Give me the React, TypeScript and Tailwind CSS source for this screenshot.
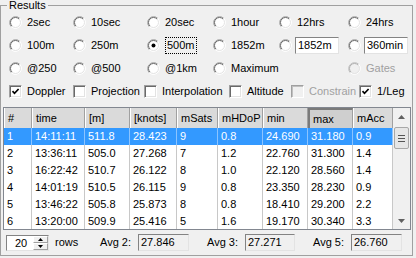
import React from "react";

// Classic Win32-style "Results" panel: option grid, flag checkboxes, results table.
const rows = [
  ["1", "14:11:11", "511.8", "28.423", "9", "0.8", "24.690", "31.180", "0.9"],
  ["2", "13:36:11", "505.0", "27.268", "7", "1.2", "22.760", "31.300", "1.4"],
  ["3", "16:22:42", "510.7", "26.122", "8", "1.0", "22.120", "28.560", "1.4"],
  ["4", "14:01:19", "510.5", "26.115", "9", "0.8", "23.350", "28.230", "0.9"],
  ["5", "13:46:22", "505.8", "25.873", "8", "0.8", "18.410", "29.200", "2.2"],
  ["6", "13:20:00", "509.9", "25.416", "5", "1.6", "19.170", "30.340", "3.3"],
];
const headers = ["#", "time", "[m]", "[knots]", "mSats", "mHDoP", "min", "max", "mAcc"];
const sunken = "border border-t-[#838383] border-l-[#838383] border-r-[#e3e3e3] border-b-[#e3e3e3]";

function Radio({ checked = false, disabled = false }: { checked?: boolean; disabled?: boolean }) {
  return (
    <svg width="13" height="13" viewBox="0 0 13 13" className="shrink-0">
      <circle cx="6.5" cy="6.5" r="6" fill={disabled ? "#f0f0f0" : "#fff"} />
      <path d="M2.26 10.74 A6 6 0 0 1 10.74 2.26" stroke={disabled ? "#c0c0c0" : "#a0a0a0"} fill="none" />
      <path d="M2.96 10.04 A5 5 0 0 1 10.04 2.96" stroke={disabled ? "#b0b0b0" : "#696969"} fill="none" />
      <path d="M10.74 2.26 A6 6 0 0 1 2.26 10.74" stroke="#ffffff" fill="none" />
      <path d="M10.04 2.96 A5 5 0 0 1 2.96 10.04" stroke="#e3e3e3" fill="none" />
      {checked && <circle cx="6.5" cy="6.5" r="2" fill="#000" />}
    </svg>
  );
}

function Check({ checked = false, disabled = false }: { checked?: boolean; disabled?: boolean }) {
  return (
    <span
      className={`flex w-[13px] h-[13px] shrink-0 items-center justify-center border border-t-[#a0a0a0] border-l-[#a0a0a0] border-r-white border-b-white ${
        disabled ? "bg-[#f0f0f0] shadow-[inset_1px_1px_0_#c0c0c0]" : "bg-white shadow-[inset_1px_1px_0_#696969,inset_-1px_-1px_0_#e3e3e3]"
      }`}
    >
      {checked && (
        <svg width="9" height="9" viewBox="0 0 9 9">
          <path d="M1.5 4.2 L3.5 6.3 L7.6 2" stroke="#000" strokeWidth="1.7" fill="none" />
        </svg>
      )}
    </span>
  );
}

function Opt({ label, checked, focus }: { label: string; checked?: boolean; focus?: boolean }) {
  return (
    <div className="flex items-center gap-[5px]">
      <Radio checked={checked} />
      <span className={focus ? "border border-dotted border-black px-[1px] leading-[15px]" : ""}>{label}</span>
    </div>
  );
}

function OptBox({ value }: { value: string }) {
  return (
    <div className="flex items-center gap-[3px]">
      <Radio />
      <div className={`${sunken} bg-white h-[17px] w-[44px] pl-[2px] leading-[15px]`}>{value}</div>
    </div>
  );
}

function Flag({ label, checked, disabled }: { label: string; checked?: boolean; disabled?: boolean }) {
  return (
    <div className="flex items-center gap-[5px]">
      <Check checked={checked} disabled={disabled} />
      <span className={`whitespace-nowrap ${disabled ? "text-[#a0a0a0]" : ""}`}>{label}</span>
    </div>
  );
}

function Arrow({ up }: { up?: boolean }) {
  return (
    <svg width="7" height="4" viewBox="0 0 7 4">
      <polygon points={up ? "3.5,0 7,4 0,4" : "0,0 7,0 3.5,4"} fill="#606060" />
    </svg>
  );
}

const cols = "grid grid-cols-[28px_53px_45px_47px_41px_45px_45px_45px_40px]";

export default function App() {
  return (
    <div className="w-[416px] h-[258px] bg-[#f0f0f0] overflow-hidden text-[11px] text-black font-['Liberation_Sans',Arial,sans-serif]">
      <fieldset className="w-[413px] border border-[#a0a0a0]">
        <legend className="ml-[6px] px-[2px] leading-[11px]">Results</legend>

        <div className="grid grid-cols-[64px_74px_66px_66px_69px_1fr] auto-rows-[23px] items-center pl-[8px]">
          <Opt label="2sec" />
          <Opt label="10sec" />
          <Opt label="20sec" />
          <Opt label="1hour" />
          <Opt label="12hrs" />
          <Opt label="24hrs" />

          <Opt label="100m" />
          <Opt label="250m" />
          <Opt label="500m" checked focus />
          <Opt label="1852m" />
          <OptBox value="1852m" />
          <OptBox value="360min" />

          <Opt label="@250" />
          <Opt label="@500" />
          <Opt label="@1km" />
          <Opt label="Maximum" />
          <div />
          <div className="flex items-center gap-[5px] text-[#a0a0a0]">
            <Radio disabled />
            <span>Gates</span>
          </div>
        </div>

        <div className="grid grid-cols-[64px_71px_85px_62px_68px_1fr] h-[23px] items-center pl-[8px]">
          <Flag label="Doppler" checked />
          <Flag label="Projection" />
          <Flag label="Interpolation" />
          <Flag label="Altitude" />
          <Flag label="Constrain" disabled />
          <Flag label="1/Leg" checked />
        </div>

        <div className="mt-[4px] ml-[2px] w-[408px] h-[123px] flex border border-[#828790] bg-white">
          <div className="w-[389px] flex flex-col">
            <div className={`${cols} h-[20px]`}>
              {headers.map((h) => (
                <div
                  key={h}
                  className={`flex items-center pl-[3px] border-r border-r-[#a0a0a0] ${
                    h === "max"
                      ? "bg-[#cfcfcf] border-t-2 border-l-2 border-t-[#7a7a7a] border-l-[#7a7a7a]"
                      : "bg-[#dadada] border-l border-l-white"
                  }`}
                >
                  {h}
                </div>
              ))}
            </div>
            <div className="h-[101px] overflow-hidden">
              {rows.map((r, i) => (
                <div key={r[0]} className={`${cols} h-[17px] ${i === 0 ? "bg-[#3399ff] text-white" : ""}`}>
                  {r.map((c, j) => (
                    <div
                      key={j}
                      className={`flex items-center pl-[3px] border-r ${i === 0 ? "border-r-[#8cc4ff]" : "border-r-[#c8c8c8]"}`}
                    >
                      {c}
                    </div>
                  ))}
                </div>
              ))}
            </div>
          </div>
          <div className="w-[17px] flex flex-col bg-[#f0f0f0]">
            <div className="h-[17px] flex items-center justify-center">
              <Arrow up />
            </div>
            <div className="mt-[2px] mx-[1px] h-[22px] rounded-[2px] border border-[#a8a8a8] bg-[#e6e6e6] flex flex-col items-center justify-center gap-[2px]">
              <span className="w-[7px] h-px bg-[#555]" />
              <span className="w-[7px] h-px bg-[#555]" />
              <span className="w-[7px] h-px bg-[#555]" />
            </div>
            <div className="flex-1" />
            <div className="h-[17px] flex items-center justify-center">
              <Arrow />
            </div>
          </div>
        </div>

        <div className="h-[25px] flex items-center pl-[5px]">
          <div className={`${sunken} w-[43px] h-[16px] flex`}>
            <div className="flex-1 bg-white pl-[8px] leading-[14px]">20</div>
            <div className="w-[15px] flex flex-col">
              <div className="flex-1 flex items-center justify-center border border-t-white border-l-white border-r-[#a0a0a0] border-b-[#a0a0a0] bg-[#f0f0f0]">
                <svg width="5" height="3" viewBox="0 0 5 3">
                  <polygon points="2.5,0 5,3 0,3" fill="#000" />
                </svg>
              </div>
              <div className="flex-1 flex items-center justify-center border border-t-white border-l-white border-r-[#a0a0a0] border-b-[#a0a0a0] bg-[#f0f0f0]">
                <svg width="5" height="3" viewBox="0 0 5 3">
                  <polygon points="0,0 5,0 2.5,3" fill="#000" />
                </svg>
              </div>
            </div>
          </div>
          <span className="ml-[6px] w-[45px]">rows</span>
          <span className="w-[38px]">Avg 2:</span>
          <div className={`${sunken} w-[51px] h-[17px] pl-[2px] leading-[15px]`}>27.846</div>
          <span className="ml-[18px] w-[38px]">Avg 3:</span>
          <div className={`${sunken} w-[50px] h-[17px] pl-[2px] leading-[15px]`}>27.271</div>
          <span className="ml-[18px] w-[38px]">Avg 5:</span>
          <div className={`${sunken} w-[51px] h-[17px] pl-[2px] leading-[15px]`}>26.760</div>
        </div>
      </fieldset>
    </div>
  );
}
